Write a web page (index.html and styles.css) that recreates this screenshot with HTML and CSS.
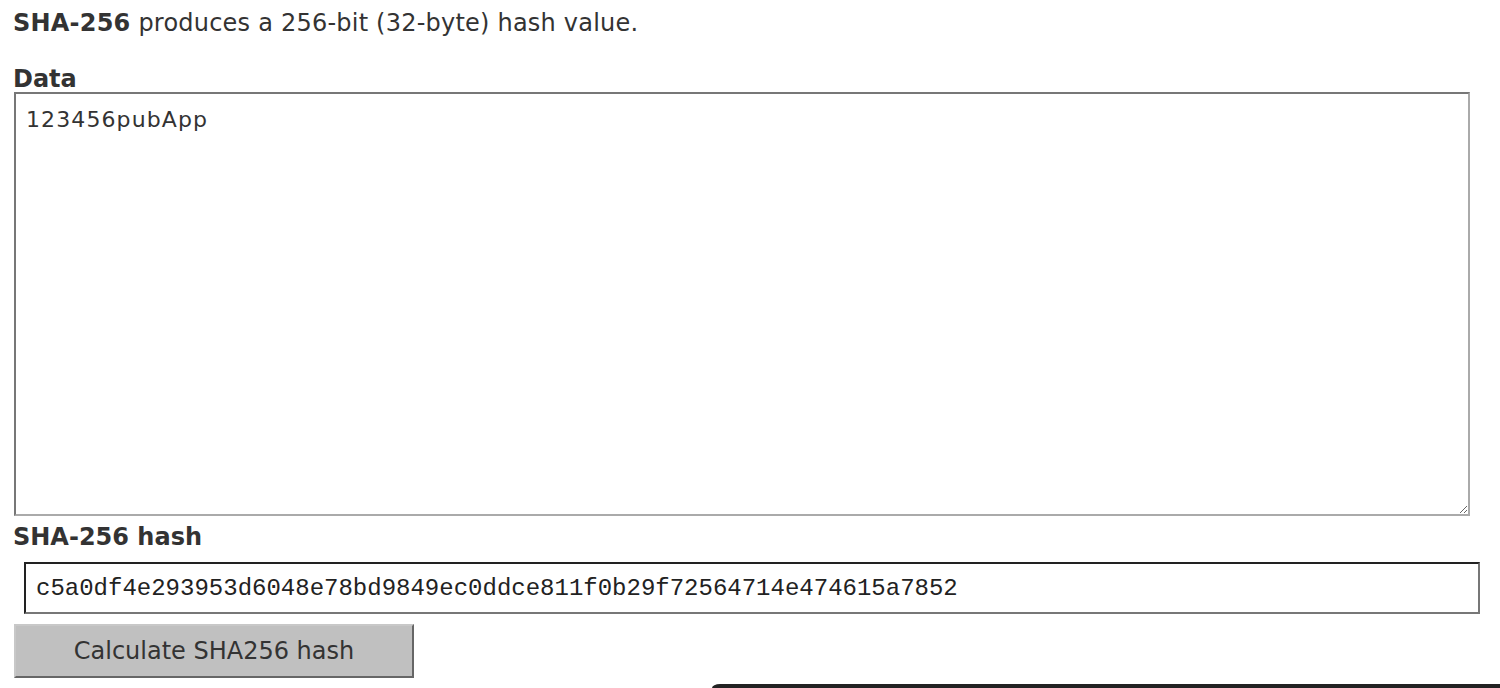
FILE: index.html
```html
<!DOCTYPE html>
<html>
<head>
<meta charset="utf-8">
<link rel="stylesheet" href="styles.css">
</head>
<body>
<div class="page">
  <p class="intro"><b>SHA-256</b> produces a 256-bit (32-byte) hash value.</p>
  <label class="label">Data</label>
  <textarea class="data">123456pubApp</textarea>
  <label class="label hash-label">SHA-256 hash</label>
  <div class="hash-row">
    <input class="hash" type="text" value="c5a0df4e293953d6048e78bd9849ec0ddce811f0b29f72564714e474615a7852">
  </div>
  <button class="calc">Calculate SHA256 hash</button>
</div>
<div class="banner"></div>
</body>
</html>
```
FILE: styles.css
```css
html, body {
  margin: 0;
  padding: 0;
  background: #fff;
  overflow: hidden;
}
body {
  font-family: "DejaVu Sans", Verdana, sans-serif;
  color: #333;
  height: 688px;
  position: relative;
}
.page {
  padding: 0 0 0 14px;
  display: flex;
  flex-direction: column;
  align-items: flex-start;
}
.intro {
  margin: 9px 0 0 -1px;
  font-size: 24px;
  line-height: 28px;
  letter-spacing: 0.22px;
}
.intro b {
  font-weight: bold;
}
.label {
  display: block;
  margin: 29px 0 0 -1px;
  font-size: 24px;
  font-weight: bold;
  line-height: 26px;
  height: 26px;
  color: #333;
}
.hash-label {
  margin-top: 8px;
}
.data {
  box-sizing: border-box;
  width: 1456px;
  height: 424px;
  margin: 0;
  padding: 12px 10px 10px 10px;
  border: 2px solid;
  border-color: #777 #aaa #aaa #777;
  font-family: "DejaVu Sans", Verdana, sans-serif;
  font-size: 22px;
  letter-spacing: 1.1px;
  line-height: 28px;
  color: #333;
  resize: both;
  outline: none;
}
.hash-row {
  padding: 12px 0 0 10px;
}
.hash {
  box-sizing: border-box;
  width: 1456px;
  height: 52px;
  margin: 0;
  padding: 0 10px;
  border: 2px solid;
  border-color: #222 #777 #777 #222;
  font-family: "Liberation Mono", "Courier New", monospace;
  font-size: 24px;
  color: #222;
  outline: none;
}
.calc {
  box-sizing: border-box;
  width: 400px;
  height: 54px;
  margin: 10px 0 0 0;
  padding: 0;
  border: 2px solid;
  border-color: #c8c8c8 #666 #666 #c8c8c8;
  background: #c0c0c0;
  font-family: "DejaVu Sans", Verdana, sans-serif;
  font-size: 24px;
  color: #333;
}
.banner {
  position: absolute;
  left: 712px;
  top: 684px;
  width: 788px;
  height: 4px;
  background: #222;
  border-top-left-radius: 8px 4px;
}
```
